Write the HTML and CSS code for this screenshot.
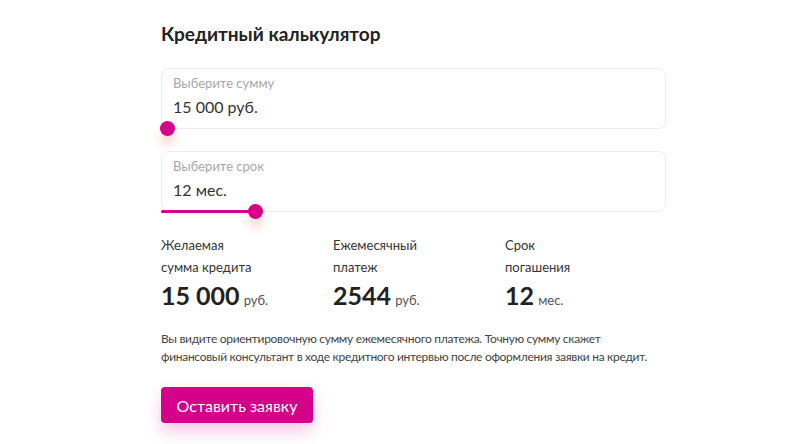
FILE: index.html
```html
<!DOCTYPE html>
<html lang="ru">
<head>
<meta charset="utf-8">
<title>Кредитный калькулятор</title>
<link rel="stylesheet" href="styles.css">
</head>
<body>
<main class="calc">
  <h1 class="calc-title">Кредитный калькулятор</h1>

  <div class="field">
    <div class="field-label">Выберите сумму</div>
    <div class="field-value">15 000 руб.</div>
    <div class="slider">
      <div class="slider-fill" style="width: 6px"></div>
      <div class="slider-thumb" style="left: 6px"></div>
    </div>
  </div>

  <div class="field">
    <div class="field-label">Выберите срок</div>
    <div class="field-value">12 мес.</div>
    <div class="slider">
      <div class="slider-fill" style="width: 94px"></div>
      <div class="slider-thumb" style="left: 94px"></div>
    </div>
  </div>

  <div class="stats">
    <div class="stat">
      <div class="stat-label">Желаемая<br>сумма кредита</div>
      <div class="stat-value"><b>15 000</b> <span>руб.</span></div>
    </div>
    <div class="stat">
      <div class="stat-label">Ежемесячный<br>платеж</div>
      <div class="stat-value"><b>2544</b> <span>руб.</span></div>
    </div>
    <div class="stat">
      <div class="stat-label">Срок<br>погашения</div>
      <div class="stat-value"><b>12</b> <span>мес.</span></div>
    </div>
  </div>

  <p class="note">Вы видите ориентировочную сумму ежемесячного платежа. Точную сумму скажет финансовый консультант в ходе кредитного интервью после оформления заявки на кредит.</p>

  <button class="btn" type="button">Оставить заявку</button>
</main>
</body>
</html>
```

FILE: styles.css
```css
* { box-sizing: border-box; }
html, body { margin: 0; padding: 0; background: #fff; }
body {
  font-family: Lato, "Liberation Sans", sans-serif;
  color: #333;
  width: 788px;
  height: 444px;
  overflow: hidden;
}
.calc {
  padding: 21px 0 0 161px;
  width: 680px;
}
.calc-title {
  margin: 0 0 21px;
  font-size: 19px;
  line-height: 26px;
  font-weight: 700;
  color: #222;
}
.field {
  position: relative;
  width: 505px;
  height: 61px;
  border: 1px solid #ececec;
  border-radius: 8px;
  padding: 5px 0 0 11px;
  margin-bottom: 22px;
}
.field-label {
  font-size: 13px;
  line-height: 18px;
  color: #a8a8a8;
}
.field-value {
  font-size: 16px;
  line-height: 22px;
  margin-top: 4px;
  color: #333;
}
.slider {
  position: absolute;
  left: -1px;
  right: -1px;
  bottom: -2px;
  height: 3px;
}
.slider-fill {
  height: 3px;
  background: #d4008a;
  border-radius: 2px;
}
.slider-thumb {
  position: absolute;
  top: -6px;
  width: 15px;
  height: 15px;
  margin-left: -7px;
  border-radius: 50%;
  background: #d4008a;
  box-shadow: 0 9px 9px rgba(255, 120, 90, 0.28);
}
.stats {
  display: flex;
  margin-top: 2px;
}
.stat { flex: 0 0 172px; }
.stat-label {
  font-size: 13px;
  line-height: 22px;
  color: #333;
}
.stat-value {
  margin-top: 1px;
  line-height: 32px;
}
.stat-value b {
  font-size: 25px;
  font-weight: 700;
  color: #222;
}
.stat-value span {
  font-size: 13px;
  color: #555;
}
.note {
  width: 505px;
  margin: 14px 0 0;
  font-size: 12px;
  letter-spacing: -0.3px;
  line-height: 18px;
  color: #444;
}
.btn {
  display: block;
  margin-top: 21px;
  width: 152px;
  height: 36px;
  border: 0;
  border-radius: 4px;
  background: #d4008a;
  color: #fff;
  font-family: inherit;
  font-size: 16px;
  box-shadow: 0 8px 16px rgba(212, 0, 138, 0.22);
}
```
